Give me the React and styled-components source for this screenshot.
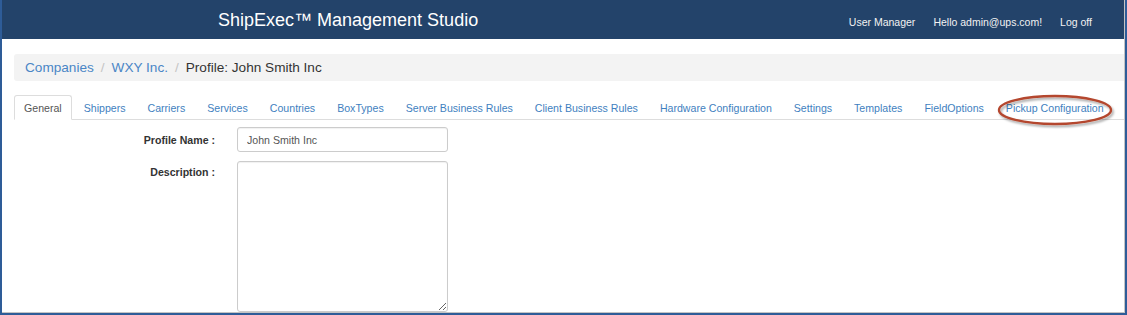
import React from 'react';
import styled, { createGlobalStyle } from 'styled-components';

const GlobalStyle = createGlobalStyle`
  html, body {
    margin: 0;
    padding: 0;
    background: #ffffff;
  }
  body {
    font-family: "Liberation Sans", Arial, sans-serif;
    color: #333333;
  }
`;

const Window = styled.div`
  position: relative;
  width: 1127px;
  height: 315px;
  box-sizing: border-box;
  border-left: 2px solid #2e5c98;
  border-right: 2px solid #2e5c98;
  border-bottom: 2px solid #2e5c98;
  overflow: hidden;
`;

const Page = styled.div`
  height: 100%;
  box-sizing: border-box;
  border-right: 1px solid #c4c4c4;
  border-bottom: 1px solid #c4c4c4;
  overflow: hidden;
  background: #ffffff;
`;

const Navbar = styled.header`
  height: 39px;
  display: flex;
  align-items: center;
  background: #23436a;
  padding-left: 216px;
  padding-right: 32px;
`;

const Brand = styled.div`
  font-size: 18px;
  color: #ffffff;
  flex: 1;
  margin-top: 2px;
`;

const NavLinks = styled.nav`
  display: flex;
  gap: 18px;
  margin-top: 5px;
`;

const NavLink = styled.a`
  font-size: 10.5px;
  color: #f2f2f2;
  text-decoration: none;
`;

const Content = styled.main`
  padding: 15px 0 0 12px;
`;

const Breadcrumb = styled.ol`
  display: flex;
  align-items: center;
  list-style: none;
  margin: 0;
  height: 27px;
  padding: 0 0 0 11px;
  background: #f3f3f3;
  border-radius: 3px 0 0 3px;
  font-size: 13.6px;
`;

const Crumb = styled.li`
  color: ${p => (p.$active ? '#333333' : '#4a86c6')};
`;

const Divider = styled.li`
  padding: 0 7px;
  color: #c4c4c4;
`;

const Tabs = styled.ul`
  display: flex;
  list-style: none;
  margin: 14px 0 0;
  padding: 0;
  height: 25px;
  box-sizing: border-box;
  border-bottom: 1px solid #dddddd;
`;

const Tab = styled.li`
  margin-right: 2px;
  margin-bottom: -1px;
  display: flex;
  align-items: center;
  padding: 0 9px;
  font-size: 10.6px;
  border: 1px solid ${p => (p.$active ? '#dddddd' : 'transparent')};
  border-bottom-color: ${p => (p.$active ? '#ffffff' : 'transparent')};
  border-radius: 3px 3px 0 0;
  background: ${p => (p.$active ? '#ffffff' : 'transparent')};
  color: ${p => (p.$active ? '#555555' : '#3f7fc0')};
  white-space: nowrap;
`;

const Form = styled.form`
  display: grid;
  grid-template-columns: 201px 211px;
  column-gap: 22px;
  row-gap: 9px;
  margin-top: 7px;
`;

const Label = styled.label`
  text-align: right;
  font-size: 10.6px;
  font-weight: bold;
  color: #333333;
  padding-top: ${p => p.$top || 7}px;
`;

const Input = styled.input`
  box-sizing: border-box;
  width: 211px;
  height: 25px;
  padding: 0 9px;
  border: 1px solid #cccccc;
  border-radius: 3px;
  font-family: "Liberation Sans", Arial, sans-serif;
  font-size: 10.6px;
  color: #555555;
  box-shadow: inset 0 1px 1px rgba(0, 0, 0, 0.06);
`;

const TextArea = styled.textarea`
  box-sizing: border-box;
  width: 211px;
  height: 151px;
  border: 1px solid #cccccc;
  border-radius: 3px;
  resize: vertical;
  box-shadow: inset 0 1px 1px rgba(0, 0, 0, 0.06);
`;

const Annotation = styled.svg`
  position: absolute;
  left: 990px;
  top: 90px;
  pointer-events: none;
`;

const tabs = [
  'General',
  'Shippers',
  'Carriers',
  'Services',
  'Countries',
  'BoxTypes',
  'Server Business Rules',
  'Client Business Rules',
  'Hardware Configuration',
  'Settings',
  'Templates',
  'FieldOptions',
  'Pickup Configuration',
];

export default function App() {
  return (
    <>
      <GlobalStyle />
      <Window>
        <Page>
          <Navbar>
            <Brand>ShipExec™ Management Studio</Brand>
            <NavLinks>
              <NavLink>User Manager</NavLink>
              <NavLink>Hello admin@ups.com!</NavLink>
              <NavLink>Log off</NavLink>
            </NavLinks>
          </Navbar>
          <Content>
            <Breadcrumb>
              <Crumb>Companies</Crumb>
              <Divider>/</Divider>
              <Crumb>WXY Inc.</Crumb>
              <Divider>/</Divider>
              <Crumb $active>Profile: John Smith Inc</Crumb>
            </Breadcrumb>
            <Tabs>
              {tabs.map((t, i) => (
                <Tab key={t} $active={i === 0}>{t}</Tab>
              ))}
            </Tabs>
            <Form>
              <Label>Profile Name :</Label>
              <Input defaultValue="John Smith Inc" />
              <Label $top={5}>Description :</Label>
              <TextArea />
            </Form>
          </Content>
        </Page>
        <Annotation width="130" height="42" viewBox="0 0 130 42">
          <defs>
            <filter id="sh" x="-10%" y="-30%" width="120%" height="160%">
              <feDropShadow dx="1.5" dy="2" stdDeviation="1.2" floodColor="#000" floodOpacity="0.35" />
            </filter>
          </defs>
          <ellipse cx="63" cy="20" rx="56" ry="14" fill="none" stroke="#b4472f" strokeWidth="2.4" filter="url(#sh)" />
        </Annotation>
      </Window>
    </>
  );
}
